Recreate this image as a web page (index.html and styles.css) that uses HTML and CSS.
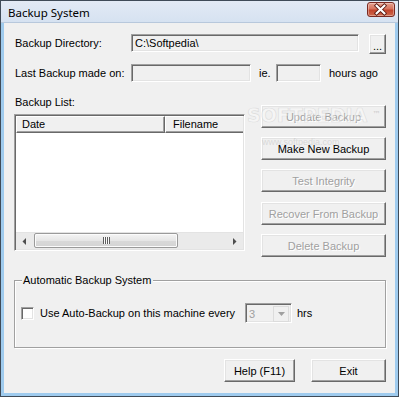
FILE: index.html
```html
<!DOCTYPE html>
<html>
<head>
<meta charset="utf-8">
<title>Backup System</title>
<link rel="stylesheet" href="styles.css">
</head>
<body>
<div class="window">
  <div class="titlebar">
    <span class="title">Backup System</span>
    <div class="close">
      <svg width="28" height="15" viewBox="0 0 28 15">
        <path d="M10 3.5 L18 11.5 M18 3.5 L10 11.5" stroke="#5a1a12" stroke-width="4" stroke-linecap="square"/>
        <path d="M10 3.5 L18 11.5 M18 3.5 L10 11.5" stroke="#ffffff" stroke-width="2.2" stroke-linecap="square"/>
      </svg>
    </div>
  </div>
  <div class="client">
    <div class="row row-dir">
      <span class="lbl">Backup Directory:</span>
      <div class="field f-dir">C:\Softpedia\</div>
      <div class="btn btn-browse">...</div>
    </div>
    <div class="row row-last">
      <span class="lbl">Last Backup made on:</span>
      <div class="field f-last"></div>
      <span class="ie">ie.</span>
      <div class="field f-hours"></div>
      <span class="hours">hours ago</span>
    </div>
    <div class="main">
      <div class="list-col">
        <div class="list-lbl">Backup List:</div>
        <div class="list">
          <div class="list-head">
            <div class="hcell h-date">Date</div>
            <div class="hcell h-file">Filename</div>
          </div>
          <div class="list-body"></div>
          <div class="hscroll">
            <div class="arrow">
              <svg width="5" height="7" viewBox="0 0 5 7"><path d="M4 0 L4 7 L0.5 3.5 Z" fill="#4d4d4d"/></svg>
            </div>
            <div class="track">
              <div class="thumb"><span class="grip"></span></div>
            </div>
            <div class="arrow">
              <svg width="5" height="7" viewBox="0 0 5 7"><path d="M1 0 L1 7 L4.5 3.5 Z" fill="#4d4d4d"/></svg>
            </div>
          </div>
        </div>
      </div>
      <div class="btn-col">
        <div class="btn btn-side disabled">Update Backup</div>
        <div class="btn btn-side">Make New Backup</div>
        <div class="btn btn-side disabled">Test Integrity</div>
        <div class="btn btn-side disabled gap-extra">Recover From Backup</div>
        <div class="btn btn-side disabled">Delete Backup</div>
      </div>
    </div>
    <div class="group">
      <span class="legend">Automatic Backup System</span>
      <div class="auto-row">
        <span class="check"></span>
        <span class="auto-lbl">Use Auto-Backup on this machine every</span>
        <div class="combo">
          <span class="combo-val">3</span>
          <span class="combo-btn">
            <svg width="7" height="4" viewBox="0 0 7 4"><path d="M0 0 L7 0 L3.5 4 Z" fill="#a0a0a0"/></svg>
          </span>
        </div>
        <span class="hrs">hrs</span>
      </div>
    </div>
    <div class="footer">
      <div class="btn btn-help">Help (F11)</div>
      <div class="btn btn-exit">Exit</div>
    </div>
    <div class="watermark">SOFTPEDIA<span class="tm">™</span></div>
    <div class="watermark-url">www.softpedia.com</div>
  </div>
</div>
</body>
</html>
```
FILE: styles.css
```css
* { box-sizing: border-box; }
body {
  margin: 0;
  background: #ffffff;
  font-family: "Liberation Sans", Arial, sans-serif;
  font-size: 11px;
  color: #000;
}
.window {
  width: 399px;
  height: 397px;
  border: 1px solid #3f4b58;
  background: #9fcbee;
  display: flex;
  flex-direction: column;
}
.titlebar {
  height: 22px;
  flex: none;
  background: linear-gradient(#e2eaf5, #d6e2f1);
  display: flex;
  align-items: center;
  justify-content: space-between;
  padding: 0 3px 0 7px;
  border-bottom: 1px solid #b8c8dc;
}
.title {
  font-family: "Noto Sans", "Liberation Sans", sans-serif;
  font-size: 11.5px;
  color: #000;
  margin-top: 1px;
}
.close {
  width: 28px;
  height: 15px;
  margin-top: -4px;
  border: 1px solid #7a2a22;
  border-radius: 3px;
  background: linear-gradient(#e4a18f 0%, #d6735d 45%, #c2432b 55%, #cf6a4e 100%);
  box-shadow: inset 0 0 0 1px rgba(255,255,255,0.35);
  display: flex;
}
.close svg { display: block; margin: -1px 0 0 -1px; }
.client {
  flex: 1;
  margin: 0 3px 3px;
  background: #f0f0f0;
  padding: 11px 9px 0 10px;
  position: relative;
}
.row { display: flex; align-items: flex-start; }
.lbl {
  width: 116px;
  margin-left: 1px;
  line-height: 18px;
  white-space: nowrap;
}
.field {
  height: 18px;
  background: #f0f0f0;
  border-top: 1px solid #a0a0a0;
  border-left: 1px solid #a0a0a0;
  border-bottom: 1px solid #ffffff;
  border-right: 1px solid #ffffff;
  box-shadow: inset 1px 1px 0 #696969, inset -1px -1px 0 #e3e3e3;
  padding-left: 3px;
  line-height: 16px;
  white-space: nowrap;
}
.f-dir { width: 228px; }
.f-last { width: 120px; }
.f-hours { width: 45px; }
.ie { width: 17px; margin-left: 8px; line-height: 18px; }
.hours { margin-left: 8px; line-height: 18px; }
.row-last { margin-top: 10px; }

.btn {
  background: #f0f0f0;
  border-top: 1px solid #ffffff;
  border-left: 1px solid #ffffff;
  border-bottom: 1px solid #696969;
  border-right: 1px solid #696969;
  box-shadow: inset -1px -1px 0 #a0a0a0, inset 1px 1px 0 #e3e3e3;
  display: flex;
  align-items: center;
  justify-content: center;
  white-space: nowrap;
}
.btn.disabled { color: #a0a0a0; text-shadow: 1px 1px 0 #ffffff; }
.btn-browse {
  width: 17px;
  height: 20px;
  margin-left: 10px;
  align-items: flex-end;
  padding-bottom: 3px;
  line-height: 8px;
}

.main { display: flex; margin-top: 14px; }
.list-col { width: 231px; }
.list-lbl { line-height: 13px; margin-left: 1px; }
.list {
  margin-top: 5px;
  height: 137px;
  border-top: 1px solid #a0a0a0;
  border-left: 1px solid #a0a0a0;
  border-bottom: 1px solid #ffffff;
  border-right: 1px solid #ffffff;
  box-shadow: inset 1px 1px 0 #696969, inset -1px -1px 0 #e3e3e3;
  padding: 1px;
  display: flex;
  flex-direction: column;
  background: #fff;
}
.list-head { display: flex; height: 17px; flex: none; overflow: hidden; }
.hcell {
  background: #f0f0f0;
  border-top: 1px solid #ffffff;
  border-left: 1px solid #ffffff;
  border-bottom: 1px solid #696969;
  border-right: 1px solid #696969;
  box-shadow: inset -1px -1px 0 #a0a0a0;
  line-height: 14px;
  padding-left: 5px;
  white-space: nowrap;
}
.h-date { width: 149px; flex: none; }
.h-file { width: 90px; flex: none; padding-left: 7px; }
.list-body { flex: 1; background: #fff; }
.hscroll {
  height: 17px;
  flex: none;
  display: flex;
  background: #eaeaea;
  border-top: 1px solid #e3e3e3;
}
.arrow {
  width: 17px;
  flex: none;
  display: flex;
  align-items: center;
  justify-content: center;
}
.track { flex: 1; padding: 0 0 1px 1px; }
.thumb {
  width: 144px;
  height: 15px;
  border: 1px solid #9a9a9a;
  border-radius: 2px;
  background: linear-gradient(#f4f4f4, #e6e6e6 50%, #d9d9d9 51%, #d4d4d4);
  box-shadow: inset 0 0 0 1px #fbfbfb;
  display: flex;
  align-items: center;
  justify-content: center;
}
.grip {
  width: 7px;
  height: 7px;
  background: repeating-linear-gradient(90deg, #5d5d5d 0 1px, #fafafa 1px 2px);
}

.btn-col {
  margin-left: 16px;
  padding-top: 9px;
  display: flex;
  flex-direction: column;
  gap: 9px;
}
.btn-side { width: 125px; height: 23px; }
.gap-extra { margin-top: 1px; }

.group {
  position: relative;
  margin-top: 23px;
  width: 372px;
  height: 68px;
  border: 1px solid #a0a0a0;
  box-shadow: inset 1px 1px 0 #ffffff, 1px 1px 0 #ffffff;
}
.legend {
  position: absolute;
  top: -7px;
  left: 7px;
  padding: 0 2px 0 1px;
  background: #f0f0f0;
  line-height: 13px;
}
.auto-row {
  display: flex;
  align-items: center;
  margin-top: 22px;
  padding-left: 6px;
  height: 20px;
}
.check {
  width: 13px;
  height: 13px;
  flex: none;
  background: #ffffff;
  border-top: 1px solid #a0a0a0;
  border-left: 1px solid #a0a0a0;
  border-bottom: 1px solid #ffffff;
  border-right: 1px solid #ffffff;
  box-shadow: inset 1px 1px 0 #696969, inset -1px -1px 0 #e3e3e3;
}
.auto-lbl { width: 205px; margin-left: 6px; white-space: nowrap; }
.combo {
  width: 47px;
  height: 20px;
  background: #f0f0f0;
  border-top: 1px solid #a0a0a0;
  border-left: 1px solid #a0a0a0;
  border-bottom: 1px solid #ffffff;
  border-right: 1px solid #ffffff;
  box-shadow: inset 1px 1px 0 #696969, inset -1px -1px 0 #e3e3e3;
  display: flex;
  padding: 2px;
}
.combo-val { flex: 1; color: #a0a0a0; line-height: 16px; padding-left: 1px; }
.combo-btn {
  width: 16px;
  height: 16px;
  background: #f0f0f0;
  border: 1px solid #dcdcdc;
  display: flex;
  align-items: center;
  justify-content: center;
}
.hrs { margin-left: 5px; }

.footer {
  display: flex;
  justify-content: flex-end;
  gap: 16px;
  margin-top: 11px;
}
.btn-help { width: 71px; height: 23px; }
.btn-exit { width: 75px; height: 23px; }

.watermark {
  position: absolute;
  left: 243px;
  top: 81px;
  font-family: "DejaVu Sans", sans-serif;
  font-weight: bold;
  font-size: 19px;
  line-height: 22px;
  white-space: nowrap;
  color: rgba(255,255,255,0.4);
  -webkit-text-stroke: 0.7px rgba(170,170,170,0.3);
  pointer-events: none;
}
.watermark .tm {
  font-size: 8px;
  vertical-align: top;
  margin-left: 5px;
  -webkit-text-stroke: 0;
  color: rgba(170,170,170,0.45);
}
.watermark-url {
  position: absolute;
  left: 258px;
  top: 114px;
  font-size: 9px;
  white-space: nowrap;
  color: rgba(170,170,170,0.35);
  pointer-events: none;
}
```
